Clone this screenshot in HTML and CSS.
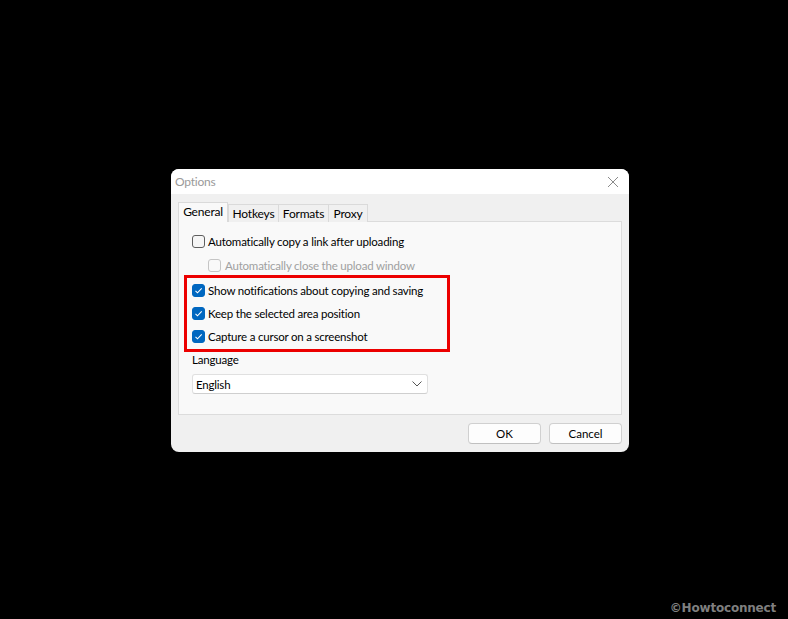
FILE: index.html
```html
<!doctype html>
<html>

<head>
    <title>Options</title>
    <meta charset='utf-8'/>
    <link rel="stylesheet" href="styles.css">
</head>

<body>
    <div id="dialog">
        <div class="titlebar">
            <span class="title">Options</span>
            <svg class="close" width="12" height="12" viewBox="0 0 12 12">
                <path d="M1 1 L11 11 M11 1 L1 11" stroke="#8a8a8a" stroke-width="1" fill="none"/>
            </svg>
        </div>
        <div class="content">
            <ul class="tabs">
                <li class="active">General</li>
                <li>Hotkeys</li>
                <li>Formats</li>
                <li>Proxy</li>
            </ul>
            <div class="panel">
                <label class="row">
                    <span class="box"></span>
                    Automatically copy a link after uploading
                </label>
                <label class="row sub disabled">
                    <span class="box"></span>
                    Automatically close the upload window
                </label>
                <div class="highlight">
                    <label class="row">
                        <span class="box checked"></span>
                        Show notifications about copying and saving
                    </label>
                    <label class="row">
                        <span class="box checked"></span>
                        Keep the selected area position
                    </label>
                    <label class="row">
                        <span class="box checked"></span>
                        Capture a cursor on a screenshot
                    </label>
                </div>
                <p class="lang-label">Language</p>
                <div class="select">
                    <span>English</span>
                    <svg width="10" height="6" viewBox="0 0 10 6">
                        <path d="M0.5 0.5 L5 5 L9.5 0.5" stroke="#555" stroke-width="1" fill="none"/>
                    </svg>
                </div>
            </div>
            <div class="buttons">
                <button>OK</button>
                <button>Cancel</button>
            </div>
        </div>
    </div>
    <div class="watermark">©Howtoconnect</div>
</body>

</html>
```

FILE: styles.css
```css
*{padding:0;margin:0;box-sizing:border-box;}
html,body{height:100%;}
body{
    background:#000;
    font-family:"Segoe UI",Lato,sans-serif;
    font-size:11.5px;
    letter-spacing:-0.2px;
    color:#000;
    padding:169px 0 0 171px;
    position:relative;
}

/* dialog */
#dialog{
    width:458px;
    height:283px;
    background:#f0f0f0;
    border-radius:8px;
    overflow:hidden;
    display:flex;
    flex-direction:column;
}
.titlebar{
    height:25px;
    background:#fff;
    display:flex;
    align-items:center;
    justify-content:space-between;
    padding:0 10px 0 4px;
}
.title{
    color:#9a9a9a;
    font-size:12px;
}
.close{ display:block; margin-top:1px; }

.content{
    padding:8px 7px 0 7px;
    display:flex;
    flex-direction:column;
}

/* tabs */
.tabs{
    list-style-type:none;
    display:flex;
    align-items:flex-end;
    height:20px;
    position:relative;
    z-index:1;
}
.tabs li{
    height:18px;
    border:1px solid #dadada;
    border-bottom:0 none;
    margin-left:-1px;
    background:#f0f0f0;
    line-height:17px;
    font-size:12px;
    text-align:center;
}
.tabs li:nth-child(2){ margin-left:0; width:51px; }
.tabs li:nth-child(3){ width:51px; }
.tabs li:nth-child(4){ width:40px; }
.tabs li.active{
    width:50px;
    height:20px;
    background:#f9f9f9;
    line-height:17px;
    margin-left:0;
}

.panel{
    height:194px;
    margin-top:-1px;
    background:#f9f9f9;
    border:1px solid #dcdcdc;
    padding:11px 0 0 13px;
}

/* checkboxes */
.row{
    display:flex;
    align-items:center;
    gap:3px;
    height:17px;
    white-space:nowrap;
}
.row.sub{
    margin:7px 0 0 16px;
    gap:4px;
}
.row.disabled{ color:#a0a0a0; }
.box{
    width:13px;
    height:13px;
    border:1px solid #5f5f5f;
    border-radius:3px;
    background:#f6f6f6;
    flex:none;
}
.disabled .box{
    border-color:#c5c5c5;
    background:#f9f9f9;
}
.box.checked{
    border-color:#0067c0;
    background:#0067c0 url("data:image/svg+xml;utf8,<svg xmlns='http://www.w3.org/2000/svg' width='11' height='11' viewBox='0 0 11 11'><path d='M2.5 5.8 L4.5 7.8 L8.7 3.4' stroke='white' stroke-width='1.1' fill='none'/></svg>") no-repeat center;
}

.highlight{
    width:266px;
    margin:1px 0 0 -8px;
    border:3px solid #ec0000;
    padding:4px 0 4px 5px;
    display:flex;
    flex-direction:column;
    gap:6px;
}

.lang-label{
    margin-top:0;
    line-height:16px;
}
.select{
    width:236px;
    height:20px;
    margin-top:6px;
    background:#fff;
    border:1px solid #e0e0e0;
    border-bottom-color:#cfcfcf;
    border-radius:3px;
    display:flex;
    align-items:center;
    justify-content:space-between;
    padding:0 5px 0 3px;
}
.select svg{ display:block; }

/* buttons */
.buttons{
    display:flex;
    justify-content:flex-end;
    gap:8px;
    margin-top:8px;
}
.buttons button{
    width:73px;
    height:21px;
    font:inherit;
    background:#fdfdfd;
    border:1px solid #d0d0d0;
    border-bottom-color:#c0c0c0;
    border-radius:4px;
    color:#000;
}

.watermark{
    position:absolute;
    right:12px;
    bottom:4px;
    color:#7f7f7f;
    font-family:"DejaVu Sans",sans-serif;
    font-weight:bold;
    font-size:12px;
    letter-spacing:-0.2px;
}
```
